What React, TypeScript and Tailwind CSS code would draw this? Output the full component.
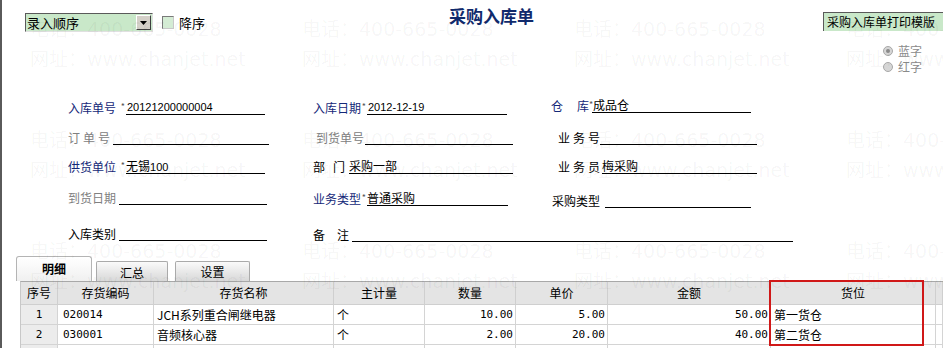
import React from "react";

const Star = () => (
  <span className="text-[9px] leading-[9px] text-[#555] mb-[4px]">*</span>
);

const headers = ["序号", "存货编码", "存货名称", "主计量", "数量", "单价", "金额", "货位", ""];

const rows = [
  ["1", "020014", "JCH系列重合闸继电器", "个", "10.00", "5.00", "50.00", "第一货仓", ""],
  ["2", "030001", "音频核心器", "个", "2.00", "20.00", "40.00", "第二货仓", ""],
  ["", "", "", "", "", "", "", "", ""],
];

function Watermark() {
  const blocks = Array.from({ length: 12 });
  return (
    <div className="absolute left-[28px] top-[14px] z-20 grid grid-cols-[repeat(4,272px)] auto-rows-[111px] pointer-events-none whitespace-nowrap font-['DejaVu_Sans','Noto_Sans_CJK_SC',sans-serif] text-[19px] leading-[30px] text-black/[0.045]">
      {blocks.map((_, i) => (
        <div key={i} className="flex flex-col">
          <span>电话：400-665-0028</span>
          <span>网址：www.chanjet.net</span>
        </div>
      ))}
    </div>
  );
}

export default function App() {
  return (
    <div className="relative w-[943px] h-[348px] overflow-hidden bg-white border-l-2 border-[#5a5a5a] font-['Noto_Sans_CJK_SC',sans-serif] text-[12px] leading-[14px] text-black whitespace-nowrap">
      <Watermark />
      <div className="relative z-10 flex flex-col">
        {/* top section */}
        <div className="flex h-[98px]">
          <div className="w-[447px] pl-[23px] pt-[13px] flex items-start">
            <div className="flex items-center">
              <div className="w-[128px] h-[19px] flex items-center justify-between bg-[#c9e8c9] border border-t-[#5a5a5a] border-l-[#5a5a5a] border-r-[#e0e0e0] border-b-[#e0e0e0]">
                <span className="pl-[1px] text-[13px]">录入顺序</span>
                <div className="w-[15px] h-[15px] mr-[1px] bg-[#d4d0c8] border border-t-white border-l-white border-r-[#404040] border-b-[#404040] flex items-center justify-center">
                  <svg width="7" height="4" viewBox="0 0 7 4">
                    <path d="M0 0 H7 L3.5 4 Z" fill="#000" />
                  </svg>
                </div>
              </div>
              <div className="ml-[9px] w-[12px] h-[13px] bg-[#d4ecd4] border border-[#7a7a7a] border-r-[#c8c8c8] border-b-[#c8c8c8]" />
              <span className="ml-[5px] text-[13px]">降序</span>
            </div>
          </div>
          <div className="pt-[6px]">
            <span className="text-[17px] leading-[20px] font-bold text-[#102a6c]">采购入库单</span>
          </div>
          <div className="ml-auto w-[120px] pt-[12px] flex flex-col">
            <div className="h-[19px] w-[120px] bg-[#c9e8c9] border-t border-l border-[#5a5a5a] pl-[3px] flex items-center">
              <span className="text-[12px]">采购入库单打印模版</span>
            </div>
            <div className="mt-[13px] h-[14px] pl-[60px] flex items-center text-[#8a8a8a]">
              <div className="w-[10px] h-[10px] rounded-full bg-[#d6d6d6] border border-[#a8a8a8] flex items-center justify-center">
                <div className="w-[4px] h-[4px] rounded-full bg-[#8a8a8a]" />
              </div>
              <span className="ml-[5px]">蓝字</span>
            </div>
            <div className="mt-[2px] h-[14px] pl-[60px] flex items-center text-[#8a8a8a]">
              <div className="w-[10px] h-[10px] rounded-full bg-[#d6d6d6] border border-[#a8a8a8]" />
              <span className="ml-[5px]">红字</span>
            </div>
          </div>
        </div>

        {/* form */}
        <div className="flex flex-col pl-[66px]">
          {/* row 1 */}
          <div className="flex items-end h-[17px]">
            <div className="w-[245px] shrink-0 flex items-end">
              <div className="w-[58px] shrink-0 flex items-end justify-between pr-[1px]">
                <span className="text-[#142878]">入库单号</span>
                <Star />
              </div>
              <div className="w-[139px] shrink-0 h-[15px] border-b border-black pl-[1px] font-['Liberation_Sans',sans-serif] text-[11px]">20121200000004</div>
            </div>
            <div className="w-[238px] shrink-0 flex items-end">
              <div className="w-[54px] shrink-0 flex items-end justify-between pr-[1px]">
                <span className="text-[#142878]">入库日期</span>
                <Star />
              </div>
              <div className="w-[140px] shrink-0 h-[15px] border-b border-black pl-[1px] font-['Liberation_Sans',sans-serif] text-[11px]">2012-12-19</div>
            </div>
            <div className="flex items-end mb-[2px]">
              <div className="w-[41px] shrink-0 flex items-end">
                <span className="text-[#142878]">仓</span>
                <span className="ml-[14px] text-[#142878]">库</span>
                <Star />
              </div>
              <div className="w-[159px] shrink-0 h-[15px] border-b border-black pl-[1px]">成品仓</div>
            </div>
          </div>

          {/* row 2 */}
          <div className="flex items-end h-[30px]">
            <div className="w-[245px] shrink-0 flex items-end">
              <div className="w-[45px] shrink-0 flex items-end">
                <span className="text-[#808080] tracking-[3px]">订单号</span>
              </div>
              <div className="w-[156px] shrink-0 h-[15px] border-b border-black" />
            </div>
            <div className="w-[238px] shrink-0 flex items-end">
              <div className="w-[52px] shrink-0 pl-[3px] flex items-end">
                <span className="text-[#808080]">到货单号</span>
              </div>
              <div className="w-[148px] shrink-0 h-[15px] border-b border-black" />
            </div>
            <div className="flex items-end">
              <div className="w-[49px] shrink-0 pl-[7px] flex items-end">
                <span className="tracking-[3px]">业务号</span>
              </div>
              <div className="w-[157px] shrink-0 h-[15px] border-b border-black" />
            </div>
          </div>

          {/* row 3 */}
          <div className="flex items-end h-[29px]">
            <div className="w-[245px] shrink-0 flex items-end">
              <div className="w-[58px] shrink-0 flex items-end justify-between pr-[1px]">
                <span className="text-[#142878]">供货单位</span>
                <Star />
              </div>
              <div className="w-[139px] shrink-0 h-[15px] border-b border-black">
                无锡<span className="font-['Liberation_Sans',sans-serif] text-[11px]">100</span>
              </div>
            </div>
            <div className="w-[238px] shrink-0 flex items-end">
              <div className="w-[36px] shrink-0 flex items-end">
                <span>部</span>
                <span className="ml-[8px]">门</span>
              </div>
              <div className="w-[164px] shrink-0 h-[15px] border-b border-black">采购一部</div>
            </div>
            <div className="flex items-end">
              <div className="w-[51px] shrink-0 pl-[7px] flex items-end">
                <span className="tracking-[3px]">业务员</span>
              </div>
              <div className="w-[155px] shrink-0 h-[15px] border-b border-black">梅采购</div>
            </div>
          </div>

          {/* row 4 */}
          <div className="flex items-end h-[33px]">
            <div className="w-[245px] shrink-0 flex items-end mb-[2px]">
              <div className="w-[51px] shrink-0 flex items-end">
                <span className="text-[#808080]">到货日期</span>
              </div>
              <div className="w-[148px] shrink-0 h-[15px] border-b border-black" />
            </div>
            <div className="w-[238px] shrink-0 flex items-end mb-[1px]">
              <div className="w-[54px] shrink-0 flex items-end justify-between pr-[1px]">
                <span className="text-[#142878]">业务类型</span>
                <Star />
              </div>
              <div className="w-[141px] shrink-0 h-[15px] border-b border-black">普通采购</div>
            </div>
            <div className="flex items-end mb-[-1px]">
              <div className="w-[54px] shrink-0 pl-[1px] flex items-end">
                <span>采购类型</span>
              </div>
              <div className="w-[146px] shrink-0 h-[15px] border-b border-black" />
            </div>
          </div>

          {/* row 5 */}
          <div className="flex items-end h-[35px]">
            <div className="w-[245px] shrink-0 flex items-end mb-[1px]">
              <div className="w-[51px] shrink-0 flex items-end">
                <span>入库类别</span>
              </div>
              <div className="w-[148px] shrink-0 h-[15px] border-b border-black" />
            </div>
            <div className="flex items-end">
              <div className="w-[39px] shrink-0 flex items-end">
                <span>备</span>
                <span className="ml-[12px]">注</span>
              </div>
              <div className="w-[441px] shrink-0 h-[15px] border-b border-black" />
            </div>
          </div>
        </div>

        {/* tabs */}
        <div className="flex items-end h-[39px] pl-[14px]">
          <div className="w-[76px] h-[25px] border border-b-0 border-[#b4b4b4] rounded-t-[3px] bg-linear-to-b from-white to-[#f0f0f0] flex items-center justify-center font-bold">
            明细
          </div>
          <div className="ml-[4px] w-[72px] h-[20px] border border-b-0 border-[#aaaaaa] rounded-t-[2px] bg-linear-to-b from-[#fafafa] to-[#d8d8d8] flex items-center justify-center pt-[2px]">
            汇总
          </div>
          <div className="ml-[7px] w-[75px] h-[20px] border border-b-0 border-[#aaaaaa] rounded-t-[2px] bg-linear-to-b from-[#fafafa] to-[#d8d8d8] flex items-center justify-center pt-[1px]">
            设置
          </div>
        </div>

        {/* table */}
        <div className="ml-[18px] w-[923px] grid grid-cols-[37px_96px_180px_91px_91px_92px_163px_165px_1fr] border-t border-l border-t-[#a8a8a8] border-l-[#c8c8c8]">
          {headers.map((h, i) => (
            <div key={"h" + i} className="h-[23px] bg-[#e4e4e4] border-r border-b border-[#cfcfcf] flex items-center justify-center">
              {h}
            </div>
          ))}
          {rows.map((r, ri) =>
            r.map((c, ci) => {
              if (ci === 0) {
                return (
                  <div key={ri + "-" + ci} className="h-[20px] bg-[#ececec] border-r border-b border-[#d4d4d4] flex items-center justify-center font-['DejaVu_Sans_Mono',monospace] text-[11px]">
                    {c}
                  </div>
                );
              }
              if (ci >= 4 && ci <= 6) {
                return (
                  <div key={ri + "-" + ci} className="h-[20px] bg-white border-r border-b border-[#d4d4d4] flex items-center justify-end pr-[2px] font-['DejaVu_Sans_Mono',monospace] text-[11px]">
                    {c}
                  </div>
                );
              }
              if (ci === 1) {
                return (
                  <div key={ri + "-" + ci} className="h-[20px] bg-white border-r border-b border-[#d4d4d4] flex items-center pl-[5px] font-['DejaVu_Sans_Mono',monospace] text-[11px]">
                    {c}
                  </div>
                );
              }
              return (
                <div key={ri + "-" + ci} className="h-[20px] bg-white border-r border-b border-[#d4d4d4] flex items-center pl-[3px]">
                  {c}
                </div>
              );
            })
          )}
        </div>
      </div>

      {/* red highlight */}
      <div className="absolute left-[767px] top-[280px] w-[155px] h-[66px] border-2 border-[#d01818] z-30 pointer-events-none" />
    </div>
  );
}
